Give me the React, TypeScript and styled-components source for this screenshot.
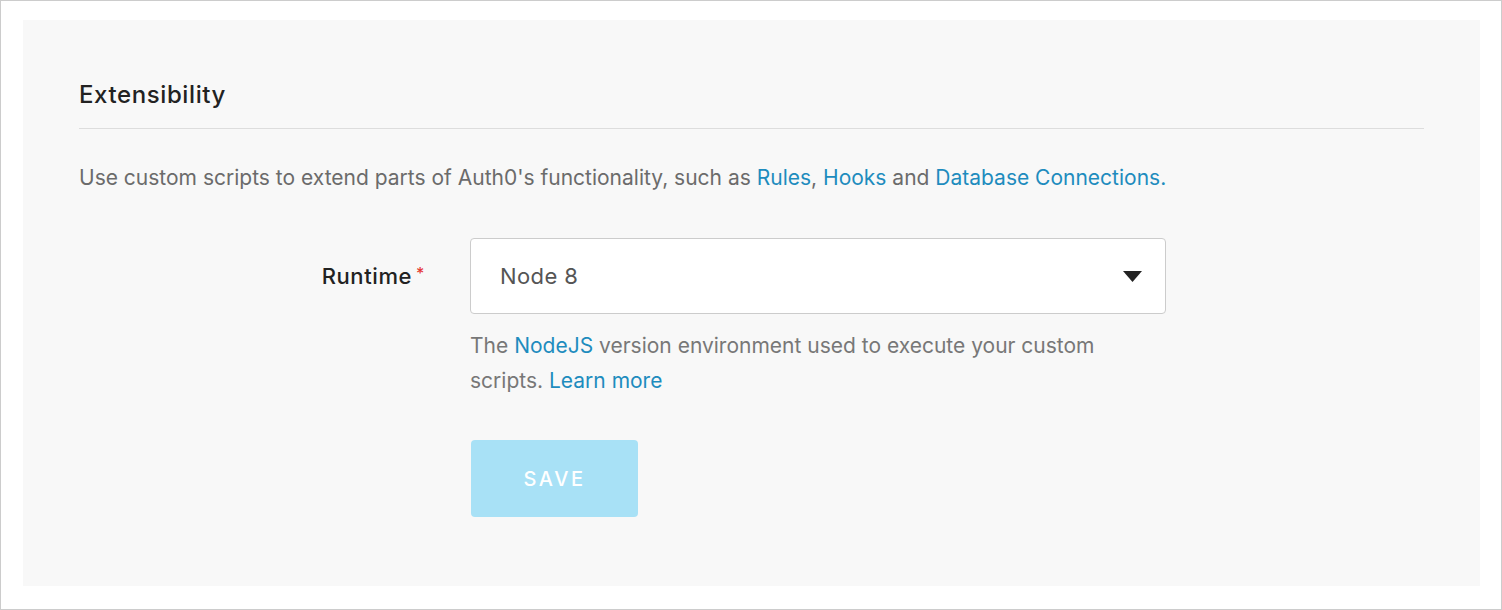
import React from 'react';
import styled, { createGlobalStyle } from 'styled-components';

const GlobalStyle = createGlobalStyle`
    * {
        box-sizing: border-box;
    }

    body {
        margin: 0;
        background: #ffffff;
        font-family: 'Inter', 'Liberation Sans', sans-serif;
    }
`;

const Frame = styled.div`
    width: 1502px;
    height: 610px;
    border: 1px solid #cccccc;
    padding: 19px 21px 23px 22px;
    background: #ffffff;
`;

const Panel = styled.section`
    height: 100%;
    background: #f8f8f8;
    padding: 60px 56px 0;
`;

const Title = styled.h2`
    margin: 0;
    padding-bottom: 18px;
    border-bottom: 1px solid #dddddd;
    font-size: 24px;
    font-weight: 500;
    line-height: 30px;
    letter-spacing: 0.6px;
    color: #222222;
`;

const Intro = styled.p`
    margin: 34px 0 0;
    font-size: 21px;
    line-height: 30px;
    color: #6b6b6b;
`;

const Link = styled.a`
    color: #1e8cbe;
    text-decoration: none;
`;

const Field = styled.div`
    display: grid;
    grid-template-columns: 346px 696px;
    column-gap: 45px;
    margin-top: 45px;
`;

const Label = styled.label`
    align-self: start;
    height: 76px;
    display: flex;
    align-items: center;
    justify-content: flex-end;
    font-size: 22px;
    font-weight: 500;
    letter-spacing: 0.6px;
    color: #222222;
`;

const Required = styled.span`
    color: #e53935;
    font-size: 16px;
    margin-left: 4px;
    align-self: flex-start;
    margin-top: 25px;
`;

const Control = styled.div`
    display: flex;
    flex-direction: column;
    align-items: flex-start;
`;

const Select = styled.div`
    width: 100%;
    height: 76px;
    display: flex;
    align-items: center;
    justify-content: space-between;
    padding: 0 23px 0 29px;
    background: #ffffff;
    border: 1px solid #cccccc;
    border-radius: 4px;
    font-size: 22px;
    letter-spacing: 0.4px;
    color: #555555;
`;

const Help = styled.p`
    margin: 14px 0 0;
    max-width: 640px;
    font-size: 21px;
    line-height: 35px;
    color: #777777;
`;

const SaveButton = styled.button`
    margin-top: 42px;
    margin-left: 1px;
    width: 167px;
    height: 77px;
    border: none;
    border-radius: 4px;
    background: #a8e1f6;
    color: #ffffff;
    font-family: inherit;
    font-size: 20px;
    font-weight: 500;
    letter-spacing: 2.6px;
`;

const Caret = () => (
    <svg width="19" height="11" viewBox="0 0 19 11">
        <polygon points="0,0 19,0 9.5,11" fill="#222222" />
    </svg>
);

export default function App() {
    return (
        <>
            <GlobalStyle />
            <Frame>
                <Panel>
                    <Title>Extensibility</Title>
                    <Intro>
                        Use custom scripts to extend parts of Auth0's functionality, such as <Link href="#">Rules</Link>,{' '}
                        <Link href="#">Hooks</Link> and <Link href="#">Database Connections.</Link>
                    </Intro>

                    <Field>
                        <Label>
                            Runtime<Required>*</Required>
                        </Label>
                        <Control>
                            <Select>
                                <span>Node 8</span>
                                <Caret />
                            </Select>
                            <Help>
                                The <Link href="#">NodeJS</Link> version environment used to execute your custom scripts.{' '}
                                <Link href="#">Learn more</Link>
                            </Help>
                            <SaveButton>SAVE</SaveButton>
                        </Control>
                    </Field>
                </Panel>
            </Frame>
        </>
    );
}
